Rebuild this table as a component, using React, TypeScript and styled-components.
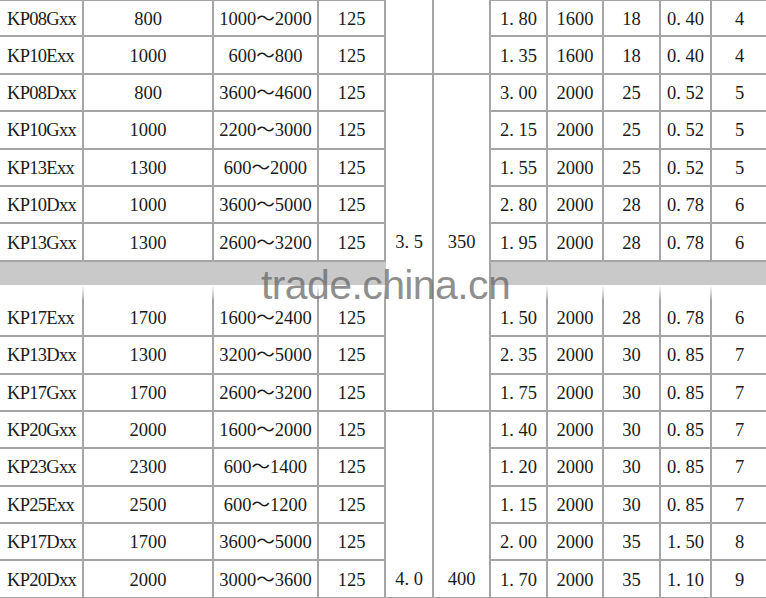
import styled, { createGlobalStyle, css } from 'styled-components';

type TRow = [string, string, string, string, string, string, string, string, string];

type TCell = {
  $align?: 'left' | 'center';
  $top?: boolean;
};

type TGroup = {
  $valign: 'top' | 'middle' | 'bottom';
};

const COLUMNS = [84, 130, 105, 67, 48, 57, 57, 56, 57, 51, 57];

const TOP_ROWS: TRow[] = [
  ['KP08Gxx', '800', '1000～2000', '125', '1. 80', '1600', '18', '0. 40', '4'],
  ['KP10Exx', '1000', '600～800', '125', '1. 35', '1600', '18', '0. 40', '4'],
  ['KP08Dxx', '800', '3600～4600', '125', '3. 00', '2000', '25', '0. 52', '5'],
  ['KP10Gxx', '1000', '2200～3000', '125', '2. 15', '2000', '25', '0. 52', '5'],
  ['KP13Exx', '1300', '600～2000', '125', '1. 55', '2000', '25', '0. 52', '5'],
  ['KP10Dxx', '1000', '3600～5000', '125', '2. 80', '2000', '28', '0. 78', '6'],
  ['KP13Gxx', '1300', '2600～3200', '125', '1. 95', '2000', '28', '0. 78', '6'],
];

const MID_ROWS: TRow[] = [
  ['KP17Exx', '1700', '1600～2400', '125', '1. 50', '2000', '28', '0. 78', '6'],
  ['KP13Dxx', '1300', '3200～5000', '125', '2. 35', '2000', '30', '0. 85', '7'],
  ['KP17Gxx', '1700', '2600～3200', '125', '1. 75', '2000', '30', '0. 85', '7'],
];

const BOTTOM_ROWS: TRow[] = [
  ['KP20Gxx', '2000', '1600～2000', '125', '1. 40', '2000', '30', '0. 85', '7'],
  ['KP23Gxx', '2300', '600～1400', '125', '1. 20', '2000', '30', '0. 85', '7'],
  ['KP25Exx', '2500', '600～1200', '125', '1. 15', '2000', '30', '0. 85', '7'],
  ['KP17Dxx', '1700', '3600～5000', '125', '2. 00', '2000', '35', '1. 50', '8'],
  ['KP20Dxx', '2000', '3000～3600', '125', '1. 70', '2000', '35', '1. 10', '9'],
];

// left part (4 cells) and right part (5 cells) of a row, split by the merged columns
function LeftCells({ row, top }: { row: TRow; top?: boolean }) {
  return (
    <>
      <Cell $align="left" $top={top}>
        <Name>{row[0]}</Name>
      </Cell>
      <Cell $top={top}>{row[1]}</Cell>
      <Cell $top={top}>{row[2]}</Cell>
      <Cell $top={top}>{row[3]}</Cell>
    </>
  );
}

function RightCells({ row, top }: { row: TRow; top?: boolean }) {
  return (
    <>
      {row.slice(4).map((value, i) => (
        <Cell key={i} $top={top}>
          {value}
        </Cell>
      ))}
    </>
  );
}

export default function App() {
  return (
    <>
      <GlobalStyle />
      <Wrapper>
        <Table>
          <colgroup>
            {COLUMNS.map((w, i) => (
              <col key={i} style={{ width: w }} />
            ))}
          </colgroup>
          <tbody>
            {TOP_ROWS.map((row, i) => (
              <Row key={row[0]}>
                <LeftCells row={row} top={i === 0} />
                {i === 0 && (
                  <>
                    <Group rowSpan={2} $valign="middle" />
                    <Group rowSpan={2} $valign="middle" />
                  </>
                )}
                {i === 2 && (
                  <>
                    <Group rowSpan={9} $valign="middle">
                      3. 5
                    </Group>
                    <Group rowSpan={9} $valign="middle">
                      350
                    </Group>
                  </>
                )}
                <RightCells row={row} top={i === 0} />
              </Row>
            ))}
            <Row>
              {[0, 1, 2, 3].map(i => (
                <GapCell key={i} />
              ))}
              {[0, 1, 2, 3, 4].map(i => (
                <GapCell key={`r${i}`} />
              ))}
            </Row>
            {MID_ROWS.map(row => (
              <Row key={row[0]}>
                <LeftCells row={row} />
                <RightCells row={row} />
              </Row>
            ))}
            {BOTTOM_ROWS.map((row, i) => (
              <Row key={row[0]}>
                <LeftCells row={row} />
                {i === 0 && (
                  <>
                    <Group rowSpan={5} $valign="bottom">
                      <GroupText>4. 0</GroupText>
                    </Group>
                    <Group rowSpan={5} $valign="bottom">
                      <GroupText>400</GroupText>
                    </Group>
                  </>
                )}
                <RightCells row={row} />
              </Row>
            ))}
          </tbody>
        </Table>
        <Watermark>trade.china.cn</Watermark>
      </Wrapper>
    </>
  );
}

const LINE = '#a5a5a5';

const GlobalStyle = createGlobalStyle`
  html, body {
    margin: 0;
    padding: 0;
    background: #ffffff;
    overflow: hidden;
  }
  body {
    width: 766px;
    height: 598px;
  }
`;

const Wrapper = styled.div`
  position: relative;
  width: 766px;
  height: 598px;
  overflow: hidden;
  background: #ffffff;
`;

const Table = styled.table`
  table-layout: fixed;
  width: 769px;
  border-collapse: separate;
  border-spacing: 0;
  font-family: 'Liberation Serif', 'Noto Sans CJK SC', serif;
  font-size: 18.5px;
  line-height: 22px;
  color: #1a1a1a;
`;

const Row = styled.tr`
  height: 37.4px;
`;

const cellBase = css`
  box-sizing: border-box;
  padding: 0;
  white-space: nowrap;
  overflow: hidden;
  border-right: 2px solid ${LINE};
  border-bottom: 2px solid ${LINE};
`;

const Cell = styled.td<TCell>`
  ${cellBase};
  height: 37.4px;
  text-align: ${({ $align }) => $align || 'center'};
  vertical-align: middle;
  padding-left: ${({ $align }) => ($align === 'left' ? '7px' : '0')};
  padding-top: 1px;
  ${({ $top }) =>
    $top &&
    css`
      border-top: 1px solid ${LINE};
    `}
`;

const Name = styled.span`
  letter-spacing: -0.7px;
`;

const Group = styled.td<TGroup>`
  ${cellBase};
  text-align: center;
  vertical-align: ${({ $valign }) => $valign};
`;

const GroupText = styled.div`
  height: 35px;
  line-height: 35px;
`;

const GapCell = styled.td`
  box-sizing: border-box;
  height: 38px;
  padding: 0;
  background: linear-gradient(to bottom, #c9c9c9 0, #c9c9c9 23px, #ffffff 23px);
  border-style: solid;
  border-width: 0 2px 0 0;
  border-image: linear-gradient(
      to bottom,
      rgba(255, 255, 255, 0) 0,
      rgba(255, 255, 255, 0) 60%,
      rgba(190, 190, 190, 0.6) 78%,
      ${LINE} 100%
    )
    1;
`;

const Watermark = styled.span`
  position: absolute;
  left: 261px;
  top: 265px;
  font-family: 'Liberation Sans', Arial, sans-serif;
  font-size: 41px;
  line-height: 41px;
  letter-spacing: -0.6px;
  color: rgba(100, 100, 100, 0.72);
  pointer-events: none;
`;
